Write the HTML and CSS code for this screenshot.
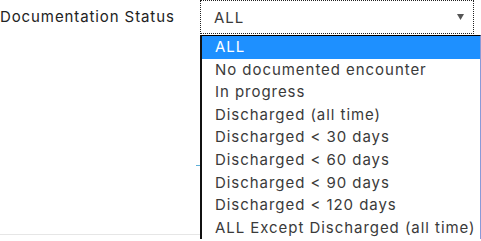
FILE: index.html
```html
<!DOCTYPE html>
<html>
<head>
<meta charset="utf-8">
<link rel="stylesheet" href="styles.css">
</head>
<body>
<div class="page">
  <div class="field">
    <label class="label">Documentation Status</label>
    <div class="select">
      <span class="value">ALL</span>
      <svg class="arrow" width="7" height="6" viewBox="0 0 7 6"><path d="M0 0H7L3.5 6Z" fill="#555"/></svg>
    </div>
  </div>
  <div class="under"></div>
  <div class="rule"></div>
  <ul class="menu">
    <li class="opt active">ALL</li>
    <li class="opt">No documented encounter</li>
    <li class="opt">In progress</li>
    <li class="opt">Discharged (all time)</li>
    <li class="opt">Discharged &lt; 30 days</li>
    <li class="opt">Discharged &lt; 60 days</li>
    <li class="opt">Discharged &lt; 90 days</li>
    <li class="opt">Discharged &lt; 120 days</li>
    <li class="opt">ALL Except Discharged (all time)</li>
  </ul>
</div>
</body>
</html>
```
FILE: styles.css
```css
html, body {
  margin: 0;
  padding: 0;
  background: #fff;
}
.page {
  position: relative;
  width: 481px;
  height: 241px;
  overflow: hidden;
  font-family: "Inter", "DejaVu Sans", sans-serif;
  font-size: 15px;
  letter-spacing: 0.95px;
  color: #3a3a3a;
}
.field {
  display: flex;
  align-items: flex-start;
}
.label {
  width: 200px;
  flex: none;
  padding-top: 7px;
  line-height: 20px;
  color: #222;
  letter-spacing: 0.9px;
}
.select {
  box-sizing: border-box;
  width: 274px;
  height: 34px;
  border: 1px dotted #222;
  display: flex;
  align-items: center;
  justify-content: space-between;
  padding: 0 9px 0 13px;
  line-height: 20px;
}
.value {
  padding-top: 1px;
  color: #3a3a3a;
}
.arrow {
  display: block;
  margin-top: -1px;
}
.under {
  position: absolute;
  left: 196px;
  right: 0;
  top: 165px;
  border-top: 1px solid #5fb0d8;
}
.rule {
  position: absolute;
  left: 0;
  width: 200px;
  top: 234px;
  border-top: 1px solid #e6e6e6;
}
.menu {
  position: absolute;
  left: 200px;
  top: 35px;
  width: 281px;
  margin: 0;
  padding: 0;
  list-style: none;
  background: #fff;
  border-top: 1px solid #000;
  border-left: 2px solid #111;
  box-sizing: border-box;
  border-right: 1px solid #8a9ad8;
}
.opt {
  height: 22.6px;
  line-height: 22.6px;
  padding-left: 13px;
  white-space: nowrap;
}
.opt.active {
  background: #1e90ff;
  color: #fff;
}
```
